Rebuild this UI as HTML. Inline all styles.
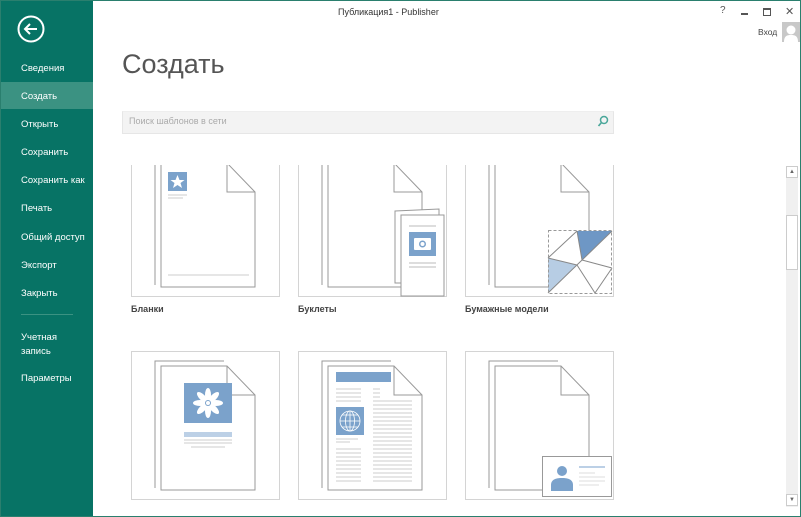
<!DOCTYPE html><html><head><meta charset="utf-8"><style>
*{margin:0;padding:0;box-sizing:border-box}
body{width:801px;height:517px;overflow:hidden;background:#fff;font-family:"Liberation Sans",sans-serif;position:relative}
.frame{position:absolute;inset:0;border:1px solid #2a7f6e;pointer-events:none;z-index:9}
.side{position:absolute;left:0;top:0;width:93px;height:517px;background:#077365}
.it{position:absolute;left:21px;color:#fff;font-size:9.5px;line-height:12px}
.sel{position:absolute;left:0;top:82px;width:93px;height:27px;background:#3b9282}
.ab{position:absolute;font-size:9px;color:#444}
.tile{position:absolute;width:150px;height:150px}
.lbl{position:absolute;top:304px;font-size:9px;font-weight:bold;color:#444}
</style></head><body>
<div class="side">
<svg style="position:absolute;left:17px;top:15px" width="28" height="28"><circle cx="14" cy="14" r="12.5" fill="none" stroke="#fff" stroke-width="2"/><path d="M20 14H8M13 9L8 14L13 19" fill="none" stroke="#fff" stroke-width="2"/></svg>
<div class="sel"></div>
<div class="it" style="top:63px">Сведения</div>
<div class="it" style="top:91px">Создать</div>
<div class="it" style="top:119px">Открыть</div>
<div class="it" style="top:147px">Сохранить</div>
<div class="it" style="top:175px">Сохранить как</div>
<div class="it" style="top:203px">Печать</div>
<div class="it" style="top:232px">Общий доступ</div>
<div class="it" style="top:260px">Экспорт</div>
<div class="it" style="top:288px">Закрыть</div>
<div style="position:absolute;left:21px;top:314px;width:52px;height:1px;background:#3b9282"></div>
<div class="it" style="top:331px;line-height:14px">Учетная<br>запись</div>
<div class="it" style="top:373px">Параметры</div>
</div>
<div class="ab" style="left:338px;top:7px;color:#333">Публикация1 - Publisher</div>
<div class="ab" style="left:720px;top:5px;font-size:10px;color:#555">?</div>
<div style="position:absolute;left:741px;top:13px;width:7px;height:1.5px;background:#555"></div>
<div style="position:absolute;left:763px;top:8px;width:8px;height:8px;border:1px solid #555;border-top-width:2px"></div>
<div class="ab" style="left:785px;top:5px;font-size:11px;color:#555">✕</div>
<div class="ab" style="left:758px;top:27px;font-size:8.5px;color:#444">Вход</div>
<svg style="position:absolute;left:782px;top:22px" width="18" height="20"><rect width="18" height="20" fill="#c8c8c8"/><circle cx="9" cy="8" r="4.5" fill="#fff"/><path d="M2 20C2 14 5 13 9 13S16 14 16 20Z" fill="#fff"/></svg>
<div style="position:absolute;left:122px;top:49px;font-size:27px;color:#555;font-weight:300">Создать</div>
<div style="position:absolute;left:122px;top:111px;width:492px;height:23px;background:#f3f3f3;border:1px solid #e6e6e6;border-top-color:#eee"></div>
<div class="ab" style="left:129px;top:116px;color:#aaa">Поиск шаблонов в сети</div>
<svg style="position:absolute;left:597px;top:115px" width="12" height="13"><circle cx="7" cy="5" r="3.5" fill="none" stroke="#4aa79a" stroke-width="1.5"/><path d="M4.5 7.5L1.5 11" stroke="#4aa79a" stroke-width="1.7"/></svg>
<div style="position:absolute;left:786px;top:166px;width:12px;height:341px;background:#f0f0f0"></div>
<div style="position:absolute;left:786px;top:166px;width:12px;height:12px;background:#fff;border:1px solid #ccc;font-size:6px;color:#666;text-align:center;line-height:10px">▲</div>
<div style="position:absolute;left:786px;top:215px;width:12px;height:55px;background:#fff;border:1px solid #ccc"></div>
<div style="position:absolute;left:786px;top:494px;width:12px;height:12px;background:#fff;border:1px solid #ccc;font-size:6px;color:#666;text-align:center;line-height:10px">▼</div>
<div style="position:absolute;left:110px;top:165px;width:520px;height:352px;overflow:hidden">
<svg class="tile" style="left:21px;top:-17px" viewBox="0 0 150 150"><rect x=".5" y=".5" width="148" height="148" fill="#fff" stroke="#d4d4d4"/><path d="M24 10V137M24 10H93" stroke="#999" fill="none"/><path d="M30 15H96L124 44V139H30Z" fill="#fff" stroke="#999"/><path d="M96 15V44H124" fill="none" stroke="#999"/><rect x="37" y="24" width="19" height="19" fill="#7ba2cb"/><path d="M46.5 27L48.5 32H53.5L49.5 35L51 40L46.5 37L42 40L43.5 35L39.5 32H44.5Z" fill="#fff"/><path d="M37 47H56M37 50H52M37 127H118" stroke="#ccc"/></svg>
<svg class="tile" style="left:188px;top:-17px" viewBox="0 0 150 150"><rect x=".5" y=".5" width="148" height="148" fill="#fff" stroke="#d4d4d4"/><path d="M24 10V137M24 10H93" stroke="#999" fill="none"/><path d="M30 15H96L124 44V139H30Z" fill="#fff" stroke="#999"/><path d="M96 15V44H124" fill="none" stroke="#999"/><path d="M97 63L141 61V135H97Z" fill="#fff" stroke="#999"/><rect x="103" y="67" width="43" height="81" fill="#fff" stroke="#999"/><path d="M111 78H138M111 115H138M111 119H138" stroke="#bbb"/><rect x="111" y="84" width="27" height="24" fill="#7ba2cb"/><rect x="116" y="90" width="17" height="12" rx="1" fill="#fff"/><circle cx="124.5" cy="96" r="3.5" fill="#7ba2cb"/><circle cx="124.5" cy="96" r="2" fill="#fff"/></svg>
<svg class="tile" style="left:355px;top:-17px" viewBox="0 0 150 150"><rect x=".5" y=".5" width="148" height="148" fill="#fff" stroke="#d4d4d4"/><path d="M24 10V137M24 10H93" stroke="#999" fill="none"/><path d="M30 15H96L124 44V139H30Z" fill="#fff" stroke="#999"/><path d="M96 15V44H124" fill="none" stroke="#999"/><rect x="83" y="82" width="64" height="64" fill="#fff"/><path d="M112 83H147L117 112Z" fill="#6e97c5"/><path d="M83 110L112 117L83 145Z" fill="#b7cde4"/><path d="M112 83L83 110M112 83L117 112M147 83L83 145M83 110L112 117M117 112L147 120M112 117L130 145M147 120L130 145" fill="none" stroke="#888"/><rect x="83.5" y="82.5" width="63" height="63" fill="none" stroke="#999" stroke-dasharray="3 2"/></svg>
<svg class="tile" style="left:21px;top:186px" viewBox="0 0 150 150"><rect x=".5" y=".5" width="148" height="148" fill="#fff" stroke="#d4d4d4"/><path d="M24 137V10H93" stroke="#999" fill="none"/><path d="M30 15H96L124 44V139H30Z" fill="#fff" stroke="#999"/><path d="M96 15V44H124" fill="none" stroke="#999"/><rect x="53" y="32" width="48" height="40" fill="#7ba2cb"/><g fill="#fff" transform="translate(77 52)"><ellipse rx="3" ry="7" cy="-8"/><ellipse rx="3" ry="7" cy="-8" transform="rotate(45)"/><ellipse rx="3" ry="7" cy="-8" transform="rotate(90)"/><ellipse rx="3" ry="7" cy="-8" transform="rotate(135)"/><ellipse rx="3" ry="7" cy="-8" transform="rotate(180)"/><ellipse rx="3" ry="7" cy="-8" transform="rotate(225)"/><ellipse rx="3" ry="7" cy="-8" transform="rotate(270)"/><ellipse rx="3" ry="7" cy="-8" transform="rotate(315)"/><circle r="3" fill="#7ba2cb"/><circle r="2"/></g><rect x="53" y="81" width="48" height="5" fill="#bcd0e6"/><path d="M53 89H101M53 92H101M60 96H94" stroke="#ccc"/></svg>
<svg class="tile" style="left:188px;top:186px" viewBox="0 0 150 150"><rect x=".5" y=".5" width="148" height="148" fill="#fff" stroke="#d4d4d4"/><path d="M24 137V10H93" stroke="#999" fill="none"/><path d="M30 15H96L124 44V139H30Z" fill="#fff" stroke="#999"/><path d="M96 15V44H124" fill="none" stroke="#999"/><rect x="38" y="21" width="55" height="10" fill="#7ba2cb"/><rect x="38" y="56" width="28" height="28" fill="#7ba2cb"/><g fill="none" stroke="#fff" stroke-width=".8"><circle cx="52" cy="70" r="10"/><ellipse cx="52" cy="70" rx="4.5" ry="10"/><path d="M42 70H62M44 64H60M44 76H60M52 60V80"/></g><path d="M38 38H63M38 42H63M38 46H63M38 50H63M38 88H60M38 91H52M38 98H63M38 102H63M38 106H63M38 110H63M38 114H63M38 118H63M38 122H63M38 126H63M38 130H63M75 38H82M75 42H82M75 46H82M75 50H114M75 54H114M75 58H114M75 62H114M75 66H114M75 70H114M75 74H114M75 78H114M75 82H114M75 86H114M75 90H114M75 94H114M75 98H114M75 102H114M75 106H114M75 110H114M75 114H114M75 118H114M75 122H114M75 126H114M75 130H114" stroke="#ccc"/></svg>
<svg class="tile" style="left:355px;top:186px" viewBox="0 0 150 150"><rect x=".5" y=".5" width="148" height="148" fill="#fff" stroke="#d4d4d4"/><path d="M24 137V10H93" stroke="#999" fill="none"/><path d="M30 15H96L124 44V139H30Z" fill="#fff" stroke="#999"/><path d="M96 15V44H124" fill="none" stroke="#999"/><rect x="77.5" y="105.5" width="69" height="40" fill="#fff" stroke="#999"/><circle cx="97" cy="120" r="5" fill="#7ba2cb"/><path d="M86 140V134C86 128 92 127 97 127S108 128 108 134V140Z" fill="#7ba2cb"/><rect x="114" y="115" width="26" height="2" fill="#bcd0e6"/><path d="M114 122H130M114 126H140M114 130H140M114 134H134" stroke="#ddd"/></svg>
</div>
<div class="lbl" style="left:131px">Бланки</div>
<div class="lbl" style="left:298px">Буклеты</div>
<div class="lbl" style="left:465px">Бумажные модели</div>
<div class="frame"></div>
</body></html>
